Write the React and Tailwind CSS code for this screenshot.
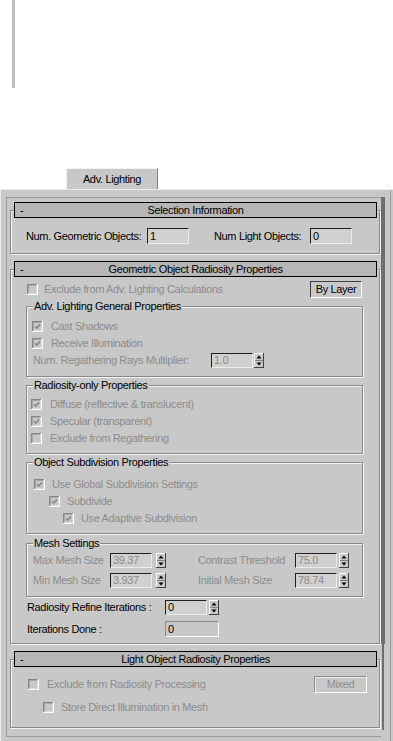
import React from "react";

const F = "font-['Liberation_Sans',Arial,sans-serif]";
const DIS = "text-[#8c8c8c]";

function Check({ checked }) {
  return (
    <svg width="11" height="11" viewBox="0 0 11 11" className="shrink-0">
      <rect x="0" y="0" width="11" height="11" fill="#ffffff" />
      <rect x="0" y="0" width="10" height="10" fill="#858585" />
      <rect x="1" y="1" width="9" height="9" fill="#dadada" />
      <rect x="1" y="1" width="8" height="8" fill="#a6a6a6" />
      <rect x="2" y="2" width="7" height="7" fill="#c8c8c8" />
      {checked && (
        <path d="M3 5.3 L4.7 7 L8.2 3.4" stroke="#8a8a8a" strokeWidth="1.6" fill="none" />
      )}
    </svg>
  );
}

function Spinner({ className = "" }) {
  return (
    <svg width="10" height="15" viewBox="0 0 10 15" className={`shrink-0 ${className}`}>
      <rect x="0" y="0" width="10" height="15" fill="#c8c8c8" />
      <rect x="0" y="0" width="10" height="1" fill="#ffffff" />
      <rect x="0" y="0" width="1" height="15" fill="#ffffff" />
      <rect x="9" y="0" width="1" height="15" fill="#404040" />
      <rect x="0" y="14" width="10" height="1" fill="#404040" />
      <rect x="1" y="7" width="8" height="1" fill="#808080" />
      <polygon points="5,2.5 7.5,5.5 2.5,5.5" fill="#000" />
      <polygon points="2.5,9.5 7.5,9.5 5,12.5" fill="#000" />
    </svg>
  );
}

function Input({ value, disabled, w = "w-[42px]", h = "h-[15px]" }) {
  return (
    <div
      className={`${w} ${h} shrink-0 border border-t-[#202020] border-l-[#202020] border-b-[#ececec] border-r-[#ececec] bg-[#d0d0d0] pl-[2px] flex items-center ${disabled ? DIS : "text-black"}`}
    >
      {value}
    </div>
  );
}

function Rollout({ title, mt, bodyClass, children }) {
  return (
    <div className={`ml-[3px] w-[370px] ${mt}`}>
      <div className="relative z-10 ml-[4px] mr-[3px] h-[16px] border border-black bg-[#b6b6b6] flex items-center">
        <span className="w-[20px] pl-[5px]">-</span>
        <span className="flex-1 text-center">{title}</span>
        <span className="w-[20px]" />
      </div>
      <div
        className={`-mt-[8px] border border-[#8a8a8a] shadow-[inset_1px_1px_0_#f2f2f2,1px_1px_0_#f2f2f2] ${bodyClass}`}
      >
        {children}
      </div>
    </div>
  );
}

function Group({ legend, className, children }) {
  return (
    <div
      className={`border border-[#8a8a8a] shadow-[inset_1px_1px_0_#f2f2f2,1px_1px_0_#f2f2f2] ${className}`}
    >
      <div className="-mt-[7px] ml-[6px] w-fit px-[1px] bg-[#c8c8c8] h-[13px] text-black">
        {legend}
      </div>
      {children}
    </div>
  );
}

function CheckRow({ label, checked, pl, gap = "ml-[7px]", mt = "" }) {
  return (
    <div className={`flex items-center h-[17px] ${pl} ${mt}`}>
      <Check checked={checked} />
      <span className={`${gap} ${DIS}`}>{label}</span>
    </div>
  );
}

export default function App() {
  return (
    <div
      className={`w-[393px] h-[741px] bg-white overflow-hidden ${F} text-[11px] leading-[13px] tracking-[-0.35px] text-black`}
    >
      {/* top white area */}
      <div className="h-[189px] flex flex-col">
        <div className="ml-[12px] w-[3px] h-[88px] bg-[#c0c0c0]" />
        <div className="flex-1" />
        <div className="ml-[66px] w-[92px] h-[21px] bg-[#c8c8c8] border-t border-l border-r border-t-[#f4f4f4] border-l-[#f4f4f4] border-r-[#808080] flex items-center justify-center pt-[1px]">
          Adv. Lighting
        </div>
      </div>

      {/* panel */}
      <div className="h-[552px] bg-[#c8c8c8] border-t border-l border-[#ececec] flex">
        <div className="w-[5px] shrink-0" />
        <div className="mt-[7px] w-[375px] h-[540px] shrink-0 border-t border-l border-b border-[#9a9a9a] overflow-hidden">
          {/* Selection Information */}
          <Rollout title="Selection Information" mt="mt-[4px]" bodyClass="pt-[17px] pb-[9px]">
            <div className="flex items-center h-[16px] pl-[15px]">
              <span className="w-[121px]">Num. Geometric Objects:</span>
              <Input value="1" w="w-[42px]" h="h-[16px]" />
              <span className="ml-[25px] w-[96px]">Num Light Objects:</span>
              <Input value="0" w="w-[42px]" h="h-[16px]" />
            </div>
          </Rollout>

          {/* Geometric Object Radiosity Properties */}
          <Rollout
            title="Geometric Object Radiosity Properties"
            mt="mt-[7px]"
            bodyClass="pt-[11px] pb-[6px]"
          >
            <div className="flex items-center h-[17px] pl-[16px] pr-[17px]">
              <Check />
              <span className={`ml-[6px] ${DIS}`}>Exclude from Adv. Lighting Calculations</span>
              <div className="ml-auto w-[52px] h-[17px] border border-t-[#404040] border-l-[#404040] border-b-white border-r-white flex items-center justify-center">
                By Layer
              </div>
            </div>

            <Group
              legend="Adv. Lighting General Properties"
              className="mt-[8px] ml-[15px] mr-[16px] pb-[7px]"
            >
              <CheckRow label="Cast Shadows" checked pl="pl-[5px]" gap="ml-[8px]" mt="mt-[5px]" />
              <CheckRow label="Receive Illumination" checked pl="pl-[5px]" gap="ml-[8px]" />
              <div className="flex items-center h-[17px] pl-[6px]">
                <span className={`w-[178px] ${DIS}`}>Num. Regathering Rays Multiplier:</span>
                <Input value="1.0" disabled />
                <Spinner className="ml-[1px]" />
              </div>
            </Group>

            <Group
              legend="Radiosity-only Properties"
              className="mt-[8px] ml-[15px] mr-[16px] pb-[6px]"
            >
              <CheckRow label="Diffuse (reflective & translucent)" checked pl="pl-[4px]" gap="ml-[8px]" mt="mt-[4px]" />
              <CheckRow label="Specular (transparent)" checked pl="pl-[4px]" gap="ml-[8px]" />
              <CheckRow label="Exclude from Regathering" pl="pl-[4px]" gap="ml-[8px]" />
            </Group>

            <Group
              legend="Object Subdivision Properties"
              className="mt-[8px] ml-[15px] mr-[16px] pb-[6px]"
            >
              <CheckRow label="Use Global Subdivision Settings" checked pl="pl-[7px]" mt="mt-[7px]" />
              <CheckRow label="Subdivide" checked pl="pl-[22px]" />
              <CheckRow label="Use Adaptive Subdivision" checked pl="pl-[36px]" />
            </Group>

            <Group legend="Mesh Settings" className="mt-[9px] ml-[15px] mr-[16px] pb-[8px]">
              <div className="flex items-center h-[15px] pl-[6px] mt-[3px]">
                <span className={`w-[77px] ${DIS}`}>Max Mesh Size</span>
                <Input value="39.37" disabled />
                <Spinner className="ml-[4px]" />
                <span className={`ml-[32px] w-[97px] ${DIS}`}>Contrast Threshold</span>
                <Input value="75.0" disabled />
                <Spinner className="ml-[2px]" />
              </div>
              <div className="flex items-center h-[15px] pl-[6px] mt-[5px]">
                <span className={`w-[77px] ${DIS}`}>Min Mesh Size</span>
                <Input value="3.937" disabled />
                <Spinner className="ml-[4px]" />
                <span className={`ml-[32px] w-[97px] ${DIS}`}>Initial Mesh Size</span>
                <Input value="78.74" disabled />
                <Spinner className="ml-[2px]" />
              </div>
            </Group>

            <div className="flex items-center h-[15px] pl-[16px] mt-[3px]">
              <span className="w-[138px]">Radiosity Refine Iterations :</span>
              <Input value="0" />
              <Spinner className="ml-[2px]" />
            </div>
            <div className="flex items-center h-[16px] pl-[16px] mt-[6px]">
              <span className="w-[138px]">Iterations Done :</span>
              <div className="w-[54px] h-[16px] border border-t-[#8a8a8a] border-l-[#8a8a8a] border-b-white border-r-white pl-[2px] flex items-center">
                0
              </div>
            </div>
          </Rollout>

          {/* Light Object Radiosity Properties */}
          <Rollout
            title="Light Object Radiosity Properties"
            mt="mt-[7px]"
            bodyClass="pt-[16px] pb-[13px]"
          >
            <div className="flex items-center h-[17px] pl-[17px] pr-[12px]">
              <Check />
              <span className={`ml-[8px] ${DIS}`}>Exclude from Radiosity Processing</span>
              <div
                className={`ml-auto w-[53px] h-[17px] border border-t-[#8a8a8a] border-l-[#8a8a8a] border-b-white border-r-white shadow-[inset_1px_1px_0_#ececec] flex items-center justify-center ${DIS}`}
              >
                Mixed
              </div>
            </div>
            <div className="flex items-center h-[13px] pl-[32px] mt-[8px]">
              <Check />
              <span className={`ml-[7px] ${DIS}`}>Store Direct Illumination in Mesh</span>
            </div>
          </Rollout>
        </div>

        {/* scrollbar */}
        <div className="w-[4px] shrink-0 flex flex-col mt-[7px]">
          <div className="h-[447px] bg-[#6e6e6e]" />
          <div className="ml-[1px] w-[2px] h-[86px] bg-[#6e6e6e]" />
        </div>
        <div className="w-[5px] shrink-0" />
        <div className="w-[1px] shrink-0 bg-[#9c9c9c]" />
        <div className="w-[2px] shrink-0" />
      </div>
    </div>
  );
}
